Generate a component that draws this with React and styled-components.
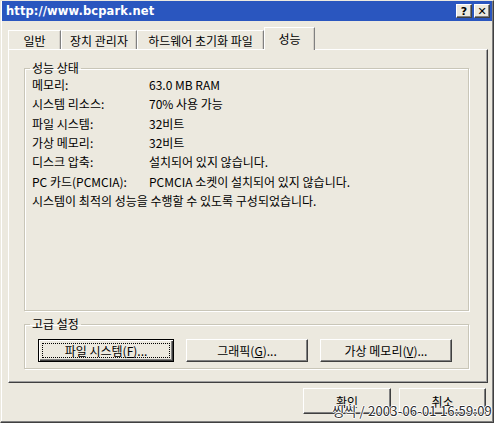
import React from 'react';
import styled, { createGlobalStyle } from 'styled-components';

const GlobalStyle = createGlobalStyle`
  html, body {
    margin: 0;
    padding: 0;
    background: #ffffff;
  }
  * {
    box-sizing: border-box;
  }
`;

const FONT = `"Noto Sans CJK KR", "Liberation Sans", sans-serif`;

const Window = styled.div`
  position: relative;
  width: 494px;
  height: 423px;
  background: #ece9df;
  border: 1px solid #ece9df;
  border-right-color: #404040;
  border-bottom-color: #404040;
  box-shadow: inset -1px -1px 0 #808080, inset 1px 1px 0 #ffffff;
  display: flex;
  flex-direction: column;
  font-family: ${FONT};
  font-size: 12px;
  color: #000;
`;

const TitleBar = styled.div`
  height: 20px;
  margin: 0 1px 0 1px;
  background: #2a56bf;
  display: flex;
  align-items: center;
  justify-content: space-between;
  padding: 0 2px 0 4px;
`;

const Title = styled.span`
  font-family: "DejaVu Sans", sans-serif;
  font-weight: bold;
  font-size: 11.5px;
  color: #ffffff;
  letter-spacing: 0.1px;
`;

const TitleButtons = styled.div`
  display: flex;
  gap: 2px;
`;

const TitleButton = styled.div`
  width: 16px;
  height: 14px;
  background: #ece9df;
  border: 1px solid;
  border-color: #ffffff #404040 #404040 #ffffff;
  box-shadow: inset -1px -1px 0 #808080;
  display: flex;
  align-items: center;
  justify-content: center;
  font-family: "DejaVu Sans", sans-serif;
  font-weight: bold;
  font-size: 11px;
  line-height: 1;
`;

const Body = styled.div`
  flex: 1;
  display: flex;
  flex-direction: column;
  padding: 6px 5px 0 7px;
`;

const TabRow = styled.div`
  height: 22px;
  display: flex;
  align-items: flex-end;
  position: relative;
  z-index: 1;
`;

const Tab = styled.div`
  height: ${p => (p.$active ? '23px' : '19px')};
  margin-bottom: ${p => (p.$active ? '-1px' : '0')};
  width: ${p => p.$w}px;
  background: #ece9df;
  border-top: 1px solid #ffffff;
  border-left: 1px solid #ffffff;
  border-right: 1px solid #808080;
  box-shadow: inset -1px 0 0 #d4d0c8;
  display: flex;
  align-items: ${p => (p.$active ? 'flex-start' : 'center')};
  justify-content: center;
  padding-top: ${p => (p.$active ? '2px' : '0')};
  white-space: nowrap;
`;

const Panel = styled.div`
  height: 334px;
  width: 480px;
  border: 1px solid;
  border-color: #ffffff #404040 #404040 #ffffff;
  box-shadow: inset -1px -1px 0 #a0a0a0;
  padding: 11px 18px 13px 15px;
  display: flex;
  flex-direction: column;
  gap: 6px;
`;

const Group = styled.fieldset`
  margin: 0;
  padding: 0 7px ${p => p.$padBottom || 0}px 7px;
  border: 1px solid #c9c6b8;
  box-shadow: 1px 1px 0 #ffffff, inset 1px 1px 0 #ffffff;
  flex: ${p => (p.$grow ? 1 : 'none')};
  min-width: 0;
`;

const Legend = styled.legend`
  padding: 0 2px;
  margin-left: -2px;
  line-height: 14px;
  font-size: 12px;
`;

const InfoGrid = styled.div`
  display: grid;
  grid-template-columns: 117px auto;
  line-height: 19.35px;
  white-space: nowrap;
`;

const FullLine = styled.div`
  grid-column: 1 / -1;
`;

const ButtonRow = styled.div`
  display: flex;
  gap: 12px;
  padding: 8px 0 0 6px;
`;

const Button = styled.button`
  width: ${p => p.$w}px;
  height: ${p => p.$h || 23}px;
  background: #ece9df;
  font-family: ${FONT};
  font-size: 12px;
  color: #000;
  border: 1px solid;
  border-color: ${p => (p.$focus ? '#000' : '#ffffff #404040 #404040 #ffffff')};
  box-shadow: ${p =>
    p.$focus
      ? 'inset 1px 1px 0 #ffffff, inset -1px -1px 0 #404040, inset -2px -2px 0 #808080'
      : 'inset -1px -1px 0 #808080'};
  padding: 0;
  position: relative;
  display: flex;
  align-items: center;
  justify-content: center;

  &::after {
    content: '';
    display: ${p => (p.$focus ? 'block' : 'none')};
    position: absolute;
    inset: 3px;
    border: 1px dotted #000;
  }
`;

const Footer = styled.div`
  display: flex;
  justify-content: flex-end;
  gap: 8px;
  padding: 5px 2px 0 0;
`;

// timestamp stamped over the bottom-right corner of the screenshot
const Watermark = styled.div`
  position: absolute;
  right: 1px;
  bottom: 4px;
  font-family: ${FONT};
  font-size: 13px;
  line-height: 14px;
  color: #2e2e2e;
  letter-spacing: 0.2px;
  text-shadow: 1px 0 0 #fff, -1px 0 0 #fff, 0 1px 0 #fff, 0 -1px 0 #fff;
`;

const rows = [
  ['메모리:', '63.0 MB RAM'],
  ['시스템 리소스:', '70% 사용 가능'],
  ['파일 시스템:', '32비트'],
  ['가상 메모리:', '32비트'],
  ['디스크 압축:', '설치되어 있지 않습니다.'],
  ['PC 카드(PCMCIA):', 'PCMCIA 소켓이 설치되어 있지 않습니다.'],
];

const tabs = [
  { label: '일반', w: 53 },
  { label: '장치 관리자', w: 76 },
  { label: '하드웨어 초기화 파일', w: 127 },
  { label: '성능', w: 51, active: true },
];

export default function App() {
  return (
    <>
      <GlobalStyle />
      <Window>
        <TitleBar>
          <Title>http://www.bcpark.net</Title>
          <TitleButtons>
            <TitleButton>?</TitleButton>
            <TitleButton>✕</TitleButton>
          </TitleButtons>
        </TitleBar>
        <Body>
          <TabRow>
            {tabs.map(t => (
              <Tab key={t.label} $w={t.w} $active={t.active}>
                {t.label}
              </Tab>
            ))}
          </TabRow>
          <Panel>
            <Group $grow>
              <Legend>성능 상태</Legend>
              <InfoGrid>
                {rows.map(([k, v]) => (
                  <React.Fragment key={k}>
                    <div>{k}</div>
                    <div>{v}</div>
                  </React.Fragment>
                ))}
                <FullLine>시스템이 최적의 성능을 수행할 수 있도록 구성되었습니다.</FullLine>
              </InfoGrid>
            </Group>
            <Group $padBottom={6}>
              <Legend>고급 설정</Legend>
              <ButtonRow>
                <Button $w={136} $focus>
                  파일 시스템(<u>F</u>)...
                </Button>
                <Button $w={122}>
                  그래픽(<u>G</u>)...
                </Button>
                <Button $w={132}>
                  가상 메모리(<u>V</u>)...
                </Button>
              </ButtonRow>
            </Group>
          </Panel>
          <Footer>
            <Button $w={88} $h={26}>확인</Button>
            <Button $w={87} $h={26}>취소</Button>
          </Footer>
        </Body>
        <Watermark>씽씩 / 2003-06-01 16:59:09</Watermark>
      </Window>
    </>
  );
}
